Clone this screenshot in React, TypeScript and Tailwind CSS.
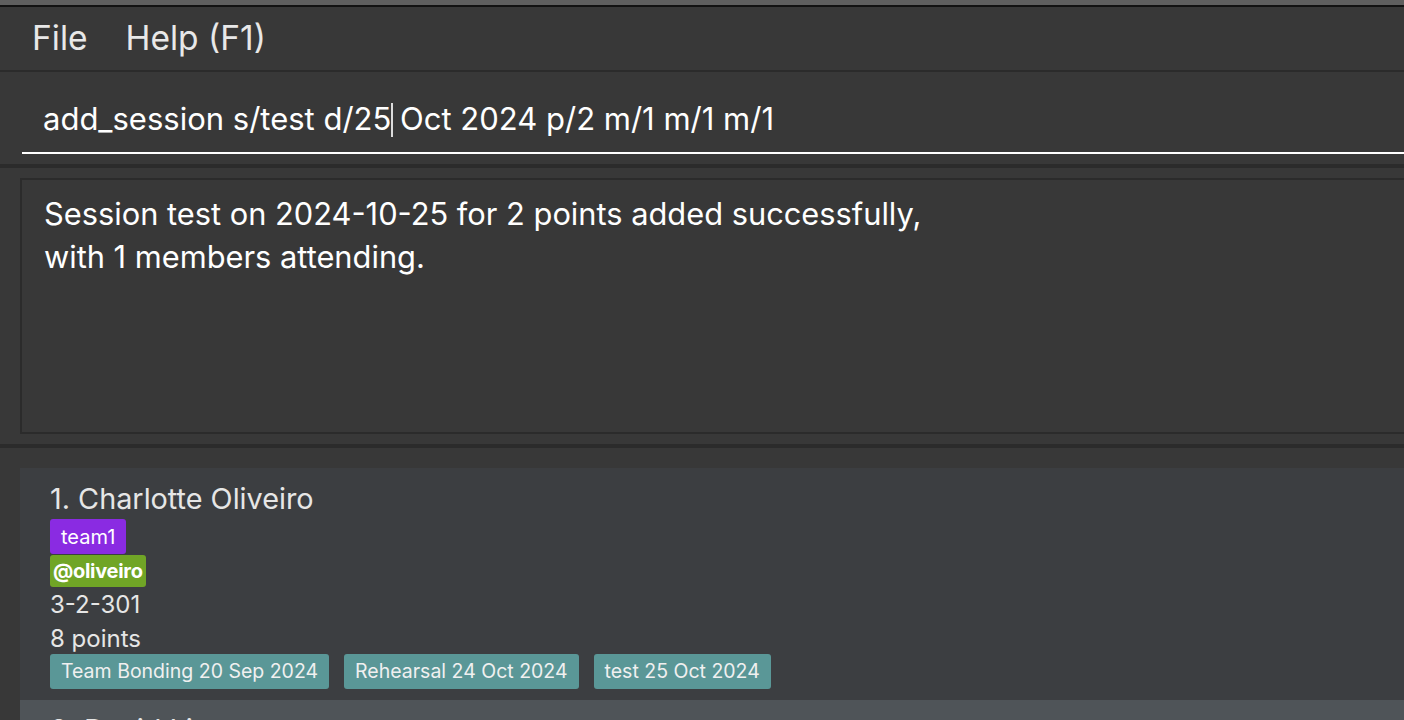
import React from 'react';

const sessions = ['Team Bonding 20 Sep 2024', 'Rehearsal 24 Oct 2024', 'test 25 Oct 2024'];

function Divider({ h }: { h: string }) {
  return <div className={`${h} w-full bg-[#2b2b2b] shrink-0`} />;
}

export default function App() {
  return (
    <div
      className="w-full h-[720px] overflow-hidden bg-[#383838] flex flex-col text-white"
      style={{ fontFamily: 'Inter, "Noto Sans", sans-serif' }}
    >
      {/* window chrome */}
      <div className="h-[5px] bg-[#5f5f5f] shrink-0" />
      <div className="h-[2px] bg-[#121212] shrink-0" />

      {/* menu bar */}
      <div className="h-[63px] shrink-0 flex items-center gap-[38px] pl-[32px] text-[33.5px] text-[#e8e8e8]">
        <span>File</span>
        <span>Help (F1)</span>
      </div>
      <Divider h="h-[2px]" />

      {/* command box */}
      <div className="h-[92px] shrink-0 pl-[22px] pt-[20px]">
        <div className="h-[62px] border-b-2 border-white flex items-center pl-[21px] pb-[5px] text-[31px]">
          <span>add_session s/test d/25</span>
          <span className="inline-block w-[2px] h-[34px] bg-[#dcdcdc] -mr-[2px]" />
          <span className="whitespace-pre"> Oct 2024 p/2 m/1 m/1 m/1</span>
        </div>
      </div>
      <Divider h="h-[4px]" />

      {/* result display */}
      <div className="h-[276px] shrink-0 pl-[20px] py-[10px]">
        <div className="h-full border-2 border-r-0 border-[#2b2b2b] pl-[22px] pt-[12px] text-[30.8px] leading-[43px]">
          <div>Session test on 2024-10-25 for 2 points added successfully,</div>
          <div>with 1 members attending.</div>
        </div>
      </div>
      <Divider h="h-[4px]" />

      {/* person list */}
      <div className="flex-1 pl-[20px] pt-[20px] flex flex-col">
        <div className="bg-[#3c3e41] h-[232px] shrink-0 pl-[30px] pt-[13px] flex flex-col items-start text-[#e6e6e6]">
          <div className="text-[28.8px] leading-[36px]">1. Charlotte Oliveiro</div>
          <div className="mt-[2px] bg-[#8a2be2] rounded-[3px] h-[35px] px-[11px] flex items-center text-[20px] text-white">
            team1
          </div>
          <div className="mt-[1px] bg-[#70a526] rounded-[3px] h-[32px] px-[3px] flex items-center text-[20px] font-bold text-white tracking-[-0.3px]">
            @oliveiro
          </div>
          <div className="text-[24px] leading-[34px] mt-[1px]">3-2-301</div>
          <div className="text-[24px] leading-[34px]">8 points</div>
          <div className="flex gap-[15px] -mt-[2px]">
            {sessions.map((s) => (
              <div
                key={s}
                className="bg-[#5a9797] rounded-[3px] h-[35px] px-[11px] flex items-center text-[19.5px] text-[#f0f0f0]"
              >
                {s}
              </div>
            ))}
          </div>
        </div>
        <div className="bg-[#4f5458] flex-1 pl-[30px] pt-[12px] text-[28.8px] leading-[36px] text-[#e6e6e6]">
          2. David Li
        </div>
      </div>
    </div>
  );
}
